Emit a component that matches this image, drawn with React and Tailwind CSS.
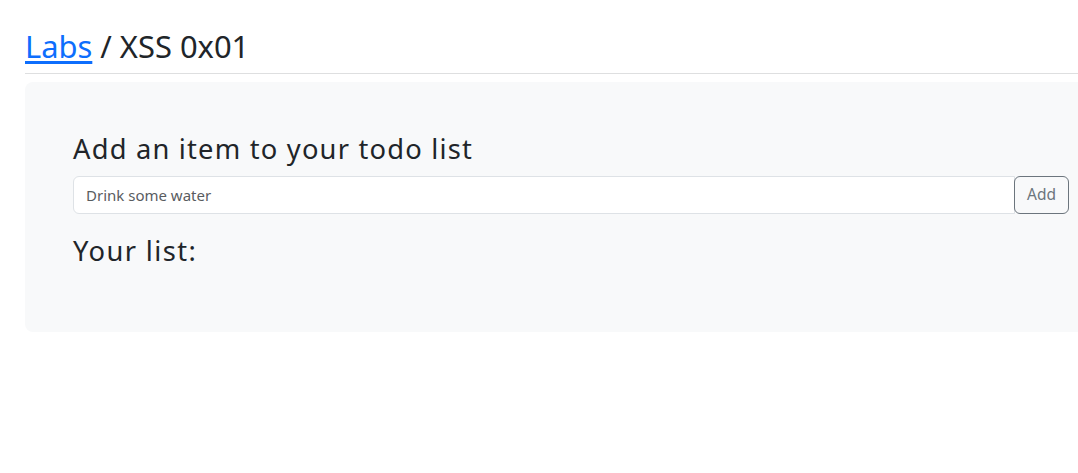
import React from 'react'

export default function App() {
  return (
    <div className="w-full min-h-screen overflow-hidden bg-white font-['Noto_Sans','Liberation_Sans',sans-serif] text-[#212529]">
      <div className="w-[1092px] ml-[25px] pt-[28px]">
        <h2 className="text-[30.9px] leading-[1.2] font-normal mb-2">
          <a href="#" className="text-[#0d6efd] underline underline-offset-[3px]">Labs</a> / XSS 0x01
        </h2>
        <hr className="border-0 border-t border-[#dedfe0] mb-2" />
        <div className="bg-[#f8f9fa] rounded-lg px-12 pt-[51px] pb-[48px]">
          <h3 className="text-[27.3px] leading-[1.2] tracking-[1.2px] font-normal mb-[10px]">Add an item to your todo list</h3>
          <form className="flex mb-[21px]" onSubmit={(e) => e.preventDefault()}>
            <input
              type="text"
              placeholder="Drink some water"
              className="flex-1 h-[38px] px-3 text-[15px] bg-white border border-[#dee2e6] rounded-l-md outline-none placeholder:text-[#595c5f]"
            />
            <button
              type="submit"
              className="-ml-px h-[38px] px-3 text-[15.5px] text-[#6c757d] border border-[#6c757d] rounded-md"
            >
              Add
            </button>
          </form>
          <h3 className="text-[27.3px] leading-[1.2] tracking-[1.4px] font-normal mb-2">Your list:</h3>
          <ul className="mb-4"></ul>
        </div>
      </div>
    </div>
  )
}
